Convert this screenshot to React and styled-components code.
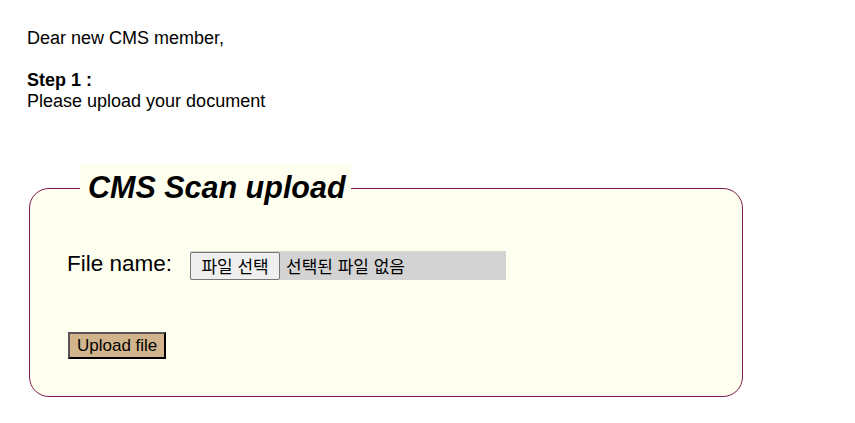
import React from "react";
import styled, { createGlobalStyle } from "styled-components";

const GlobalStyle = createGlobalStyle`
  body {
    margin: 0;
    background: #ffffff;
    font-family: "Liberation Sans", Arial, sans-serif;
    color: #000000;
  }
`;

const Page = styled.div`
  padding: 28px 0 0 27px;
  font-size: 18px;
`;

const Intro = styled.div`
  line-height: normal;
`;

const Bold = styled.b`
  font-weight: bold;
`;

const ScanBox = styled.fieldset`
  width: 714px;
  margin: 52px 0 0 2px;
  padding: 0 0 37px 0;
  border: 1px solid #7d1a50;
  border-radius: 20px;
  background: #fffff0;
  box-sizing: border-box;
`;

const Title = styled.legend`
  margin-left: 50px;
  padding: 6px 5px 6px 8px;
  height: 48px;
  box-sizing: border-box;
  background: #fffff0;
  font-size: 30.5px;
  font-weight: bold;
  font-style: italic;
  line-height: normal;
`;

const FileRow = styled.div`
  display: flex;
  align-items: center;
  margin-top: 39px;
  padding-left: 37px;
`;

const Label = styled.label`
  font-size: 22.5px;
  margin-right: 18px;
  margin-top: -3px;
`;

const FilePicker = styled.div`
  display: flex;
  align-items: center;
  width: 316px;
  height: 29px;
  background: #d3d3d3;
  font-family: "Liberation Sans", "Noto Sans CJK KR", sans-serif;
  font-size: 17px;
`;

const PickButton = styled.span`
  display: flex;
  align-items: center;
  justify-content: center;
  width: 90px;
  height: 28px;
  box-sizing: border-box;
  border: 1px solid #767676;
  border-radius: 2px;
  background: #efefef;
  cursor: pointer;
`;

const PickStatus = styled.span`
  margin-left: 6px;
`;

const HiddenInput = styled.input`
  display: none;
`;

const UploadButton = styled.button`
  margin: 52px 0 0 38px;
  padding: 0 7px;
  height: 27px;
  box-sizing: border-box;
  font-family: "Liberation Sans", Arial, sans-serif;
  font-size: 17px;
  line-height: 1;
  color: #000000;
  background: #d2b48c;
  border: 2px solid;
  border-color: #555555 #000000 #000000 #555555;
  cursor: pointer;
`;

const App = () => {
  return (
    <>
      <GlobalStyle />
      <Page>
        <Intro>
          Dear new CMS member,
          <br />
          <br />
          <Bold>Step 1 :</Bold>
          <br />
          Please upload your document
        </Intro>
        <ScanBox>
          <Title>CMS Scan upload</Title>
          <FileRow>
            <Label htmlFor="scan">File name:</Label>
            <FilePicker as="label" htmlFor="scan">
              <PickButton>파일 선택</PickButton>
              <PickStatus>선택된 파일 없음</PickStatus>
            </FilePicker>
            <HiddenInput id="scan" type="file" />
          </FileRow>
          <UploadButton type="button">Upload file</UploadButton>
        </ScanBox>
      </Page>
    </>
  );
};

export default App;
